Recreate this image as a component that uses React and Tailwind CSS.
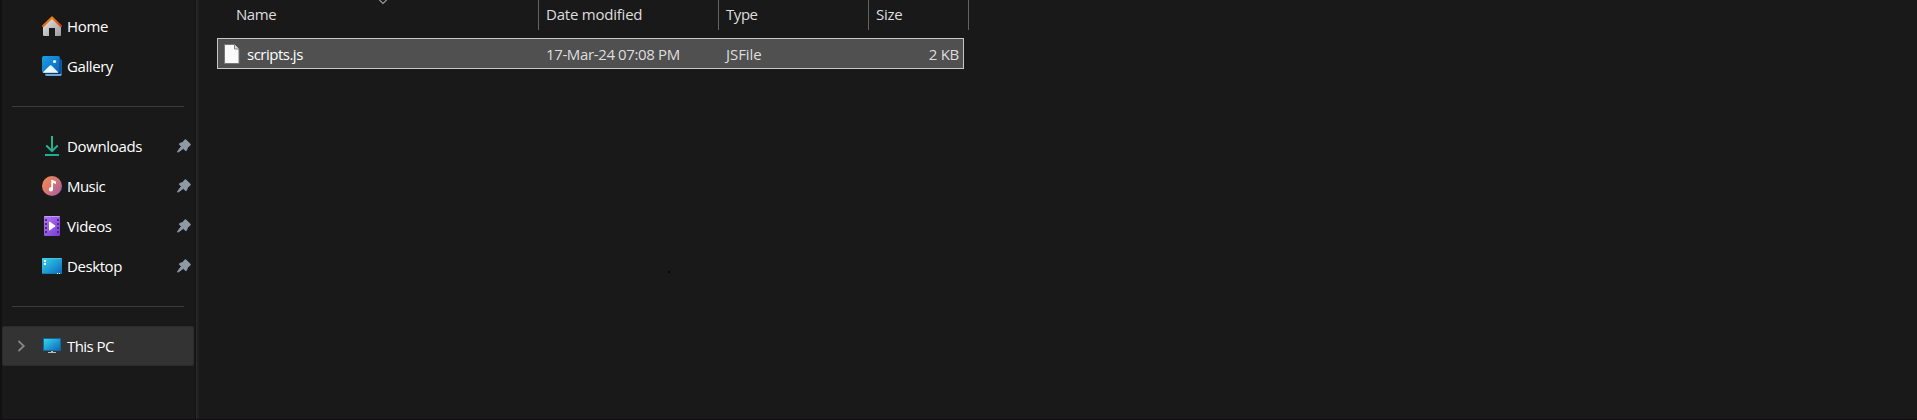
import React from "react";

const HomeIcon = () => (
  <svg width="20" height="20" viewBox="0 0 20 20">
    <defs>
      <linearGradient id="hw" x1="0" y1="0" x2="1" y2="1">
        <stop offset="0" stopColor="#e8e8e8" />
        <stop offset="1" stopColor="#9a9a9a" />
      </linearGradient>
      <linearGradient id="hr" x1="0" y1="0" x2="1" y2="1">
        <stop offset="0" stopColor="#f59a10" />
        <stop offset="1" stopColor="#d63c10" />
      </linearGradient>
    </defs>
    <path d="M1 10L10 2l9 8v9a1 1 0 0 1-1 1h-5v-8H7v8H2a1 1 0 0 1-1-1z" fill="url(#hw)" />
    <path d="M1.200 10L10 1.500l8.800 8.500" fill="none" stroke="url(#hr)" strokeWidth="2.300" strokeLinecap="round" strokeLinejoin="round" />
  </svg>
);

const GalleryIcon = () => (
  <svg width="20" height="20" viewBox="0 0 20 20">
    <defs>
      <linearGradient id="gb" x1="0" y1="0" x2="1" y2="1">
        <stop offset="0" stopColor="#1ba1e6" />
        <stop offset="1" stopColor="#0861bd" />
      </linearGradient>
    </defs>
    <path d="M3 18h15V3q2 0 2 2v13a2 2 0 0 1-2 2H5q-2 0-2-2z" fill="#0f5fb0" />
    <path d="M3 18h16.800q-.4 2-2 2H5q-2 0-2-2z" fill="#69a9dc" />
    <path d="M0 2a2 2 0 0 1 2-2h14a2 2 0 0 1 2 2v13a2 2 0 0 1-2 2H2a2 2 0 0 1-2-2z" fill="url(#gb)" />
    <path d="M18 3v13.500q-.3 1-1.500 1H3" fill="none" stroke="#143a60" strokeWidth=".9" />
    <path d="M1 16.300L7.800 9.500q.8-.7 1.600 0l6.800 6.800q-.5.500-1.200.5H2q-.6 0-1-.5z" fill="#eef7ff" />
    <circle cx="12.500" cy="5.500" r="1.600" fill="#f3faff" />
  </svg>
);

const DownloadIcon = () => (
  <svg width="20" height="20" viewBox="0 0 20 20">
    <defs>
      <linearGradient id="dg" gradientUnits="userSpaceOnUse" x1="3" y1="0" x2="17" y2="20">
        <stop offset="0" stopColor="#35c77e" />
        <stop offset="1" stopColor="#12a99d" />
      </linearGradient>
    </defs>
    <path d="M10 0V15M4.300 9.500L10 15.200l5.700-5.700M3 19h14" fill="none" stroke="url(#dg)" strokeWidth="1.900" />
  </svg>
);

const MusicIcon = () => (
  <svg width="20" height="20" viewBox="0 0 20 20">
    <defs>
      <linearGradient id="mg" x1="0" y1="0.1" x2="1" y2="0.9">
        <stop offset="0" stopColor="#f58b51" />
        <stop offset=".55" stopColor="#d47278" />
        <stop offset="1" stopColor="#9659b0" />
      </linearGradient>
    </defs>
    <circle cx="10" cy="10" r="10" fill="url(#mg)" />
    <path d="M9.200 4.600q0-1 1-.7l3 1q.8.300.8 1v1.300q0 .7-.8.500l-2.200-.6v6.200a2.100 2.100 0 1 1-1.800-2z" fill="#fff" />
  </svg>
);

const VideoIcon = () => (
  <svg width="20" height="20" viewBox="0 0 20 20">
    <defs>
      <linearGradient id="vg" x1="0" y1="0" x2="1" y2="1">
        <stop offset="0" stopColor="#b377f0" />
        <stop offset="1" stopColor="#783bd9" />
      </linearGradient>
    </defs>
    <rect x="2" y="0" width="16" height="20" rx="1" fill="url(#vg)" />
    <path d="M2.500.5h15" stroke="#c79af8" />
    <path d="M3 3h2v2H3zm0 4h2v2H3zm0 4h2v2H3zm0 4h2v2H3zM15 3h2v2h-2zm0 4h2v2h-2zm0 4h2v2h-2zm0 4h2v2h-2z" fill="#4a2a82" />
    <path d="M7 6.200q0-1 .9-.5l5.200 3.800q.6.500 0 1L7.900 14.300q-.9.500-.9-.5z" fill="#fff" />
  </svg>
);

const DesktopIcon = () => (
  <svg width="20" height="20" viewBox="0 0 20 20">
    <defs>
      <linearGradient id="kg" x1="0" y1="0" x2="1" y2="1">
        <stop offset="0" stopColor="#36d5ea" />
        <stop offset="1" stopColor="#0b68bf" />
      </linearGradient>
    </defs>
    <rect x="0" y="2" width="20" height="16" rx="1" fill="url(#kg)" />
    <path d="M.5 2.500h19" stroke="#52c9e0" strokeWidth=".8" />
    <path d="M0 17.500h20" stroke="#1478a8" strokeWidth=".8" />
    <path d="M2 4h2v2H2zm0 3h2v2H2zM15 17h1v1h-1zm2 0h1v1h-1z" fill="#f4fdff" />
  </svg>
);

const PcIcon = () => (
  <svg width="20" height="20" viewBox="0 0 20 20">
    <path d="M9 14h2v2h3v1H6v-1h3z" fill="#b8bec2" />
    <rect x="1" y="2" width="18" height="13" rx=".5" fill="#10689c" />
    <rect x="2" y="3" width="16" height="11" fill="url(#kg)" />
  </svg>
);

const PinIcon = () => (
  <svg width="14" height="14" viewBox="0 0 14 14">
    <path d="M7.600 1q.7-.9 1.500-.1l4 4q.8.800-.1 1.500L10.800 8l-1.300 3.300q-.4.900-1.200.2L6.200 9.400l-4.400 3.400-1.200.3.300-1.200L4.300 7.500 2.500 5.600q-.6-.8.300-1.200L6 3.300z" fill="#8d99a3" stroke="#8d99a3" strokeWidth=".9" strokeLinejoin="round" />
  </svg>
);

const FileIcon = () => (
  <svg width="18" height="22" viewBox="0 0 18 22">
    <path d="M1.500 1.500h10l4.500 4.500v14.500h-14.500z" fill="#fafafa" stroke="#777" />
    <path d="M11.500 1.500v4.500h4.500" fill="#dedede" stroke="#777" strokeWidth=".9" />
  </svg>
);

function Item({ icon: Icon, label, labelClass, pinned }) {
  return (
    <div className="flex h-10 items-center pl-10 pr-[3px]">
      <Icon />
      <span className={`ml-[5px] whitespace-nowrap text-white ${labelClass}`}>{label}</span>
      {pinned && <span className="ml-auto"><PinIcon /></span>}
    </div>
  );
}

const Divider = () => (
  <div className="flex h-10 items-center pl-[10px] pr-[10px]">
    <div className="mt-px h-px w-full bg-[#3b3b3b]" />
  </div>
);

export default function App() {
  return (
    <div className="flex h-[420px] w-full overflow-hidden border-b border-[#150c12] bg-[#191919] font-['Open_Sans','Noto_Sans',sans-serif] text-[15px] leading-5">
      <div className="w-[2px] shrink-0 bg-[#111111]" />
      <nav className="w-[192px] shrink-0 pt-[6px]">
        <Item icon={HomeIcon} label="Home" labelClass="tracking-[-0.35px]" />
        <Item icon={GalleryIcon} label="Gallery" labelClass="tracking-[-0.42px]" />
        <Divider />
        <Item icon={DownloadIcon} label="Downloads" labelClass="tracking-[-0.35px]" pinned />
        <Item icon={MusicIcon} label="Music" labelClass="tracking-[-0.55px]" pinned />
        <Item icon={VideoIcon} label="Videos" labelClass="tracking-[-0.3px]" pinned />
        <Item icon={DesktopIcon} label="Desktop" labelClass="tracking-[-0.42px]" pinned />
        <Divider />
        <div className="flex h-10 items-center rounded-[2px] border border-[#2b2b2b] bg-[#333333] pl-[14px]">
          <svg width="9" height="12" viewBox="0 0 9 12" className="mr-[16px]">
            <path d="M1.500 1L6.800 6l-5.300 5" fill="none" stroke="#858585" strokeWidth="1.800" />
          </svg>
          <PcIcon />
          <span className="ml-[5px] whitespace-nowrap tracking-[-0.55px] text-white">This PC</span>
        </div>
      </nav>
      <div className="ml-px flex w-[4px] shrink-0 bg-[#202020]">
        <div className="w-px bg-[#131313]" />
        <div className="w-px bg-[#2b2b2b]" />
      </div>
      <main className="relative grow pl-[18px]">
        <div className="flex h-[30px] text-[#dedede]">
          <div className="flex w-[322px] items-center border-r border-[#636363] pb-[2px] pl-[19px]">
            <span className="tracking-[-0.45px]">Name</span>
          </div>
          <div className="flex w-[180px] items-center border-r border-[#636363] pb-[2px] pl-[7px]">
            <span className="tracking-[-0.22px]">Date modified</span>
          </div>
          <div className="flex w-[150px] items-center border-r border-[#636363] pb-[2px] pl-[7px]">
            <span className="tracking-[-0.45px]">Type</span>
          </div>
          <div className="flex w-[100px] items-center border-r border-[#636363] pb-[2px] pl-[7px]">
            <span className="tracking-[-0.3px]">Size</span>
          </div>
        </div>
        <svg width="10" height="5" viewBox="0 0 10 5" className="absolute left-[179px] top-0">
          <path d="M1 -.5l4 4 4-4" fill="none" stroke="#a0a0a0" strokeWidth="1.100" />
        </svg>
        <div className="mt-2 flex h-[31px] w-[747px] items-center border border-[#c8c8c8] bg-[#505050] text-[#dedede]">
          <div className="flex w-[328px] items-center pl-[5px]">
            <FileIcon />
            <span className="ml-[6px] tracking-[-0.5px] text-white">scripts.js</span>
          </div>
          <div className="w-[180px] tracking-[-0.37px]">17-Mar-24 07:08 PM</div>
          <div className="w-[150px] tracking-[-0.05px]">JSFile</div>
          <div className="grow pr-[4px] text-right tracking-[-0.3px]">2 KB</div>
        </div>
        <div className="absolute left-[469px] top-[271px] h-[2px] w-[2px] bg-[#070707]" />
      </main>
    </div>
  );
}
